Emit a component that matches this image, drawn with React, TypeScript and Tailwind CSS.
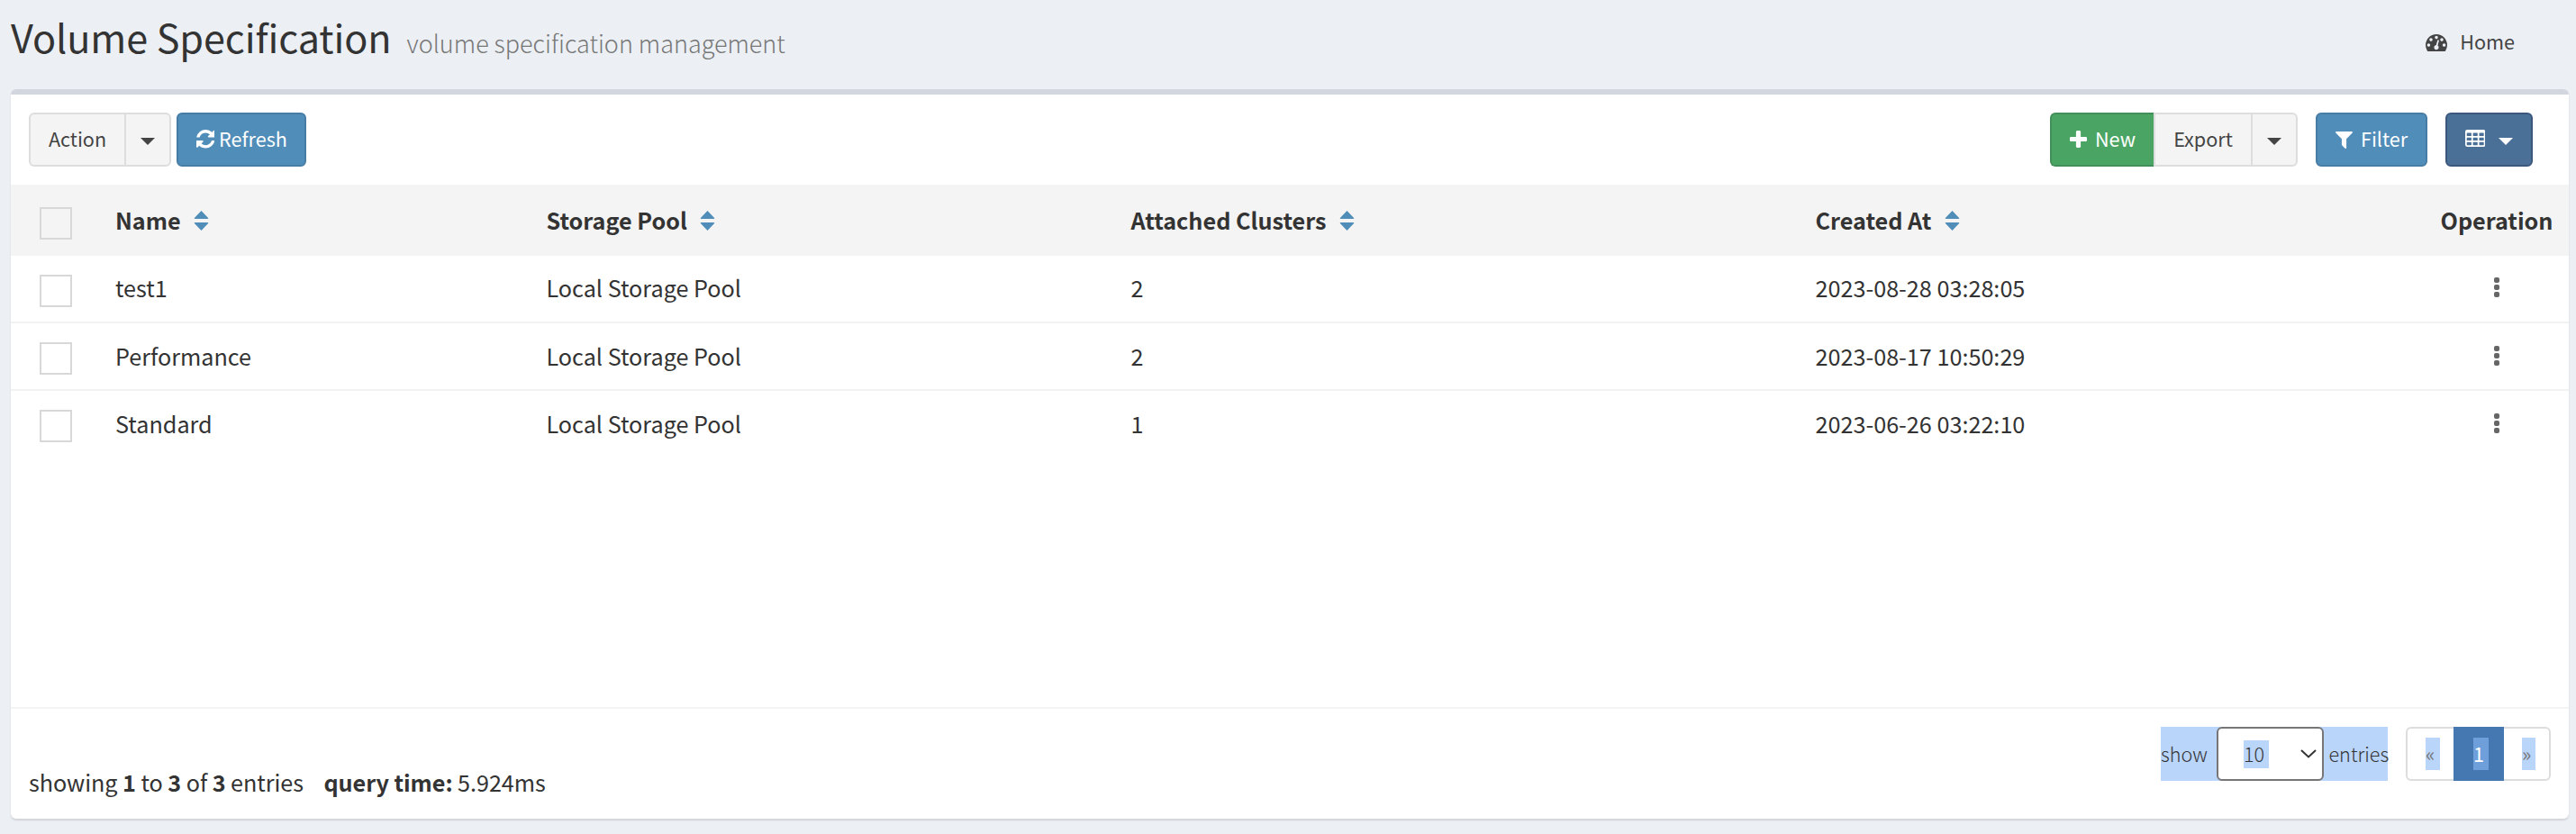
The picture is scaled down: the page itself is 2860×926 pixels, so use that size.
import React from "react";

const ICONS = {
  dashboard: {
    box: "0 256 1792 1408",
    size: "w-[24px] h-[19px]",
    d: "M384 1152q0-53-37.5-90.5t-90.5-37.5-90.5 37.5-37.5 90.5 37.5 90.5 90.5 37.5 90.5-37.5 37.5-90.5zm192-448q0-53-37.5-90.5t-90.5-37.5-90.5 37.5-37.5 90.5 37.5 90.5 90.5 37.5 90.5-37.5 37.5-90.5zm428 481l101-382q6-26-7.5-48.5t-38.5-29.5-48 6.5-30 39.5l-101 382q-60 5-107 43.5t-63 98.5q-20 77 20 146t117 89 146-20 89-117q16-60-6-117t-72-91zm660-33q0-53-37.5-90.5t-90.5-37.5-90.5 37.5-37.5 90.5 37.5 90.5 90.5 37.5 90.5-37.5 37.5-90.5zm-640-640q0-53-37.5-90.5t-90.5-37.5-90.5 37.5-37.5 90.5 37.5 90.5 90.5 37.5 90.5-37.5 37.5-90.5zm448 192q0-53-37.5-90.5t-90.5-37.5-90.5 37.5-37.5 90.5 37.5 90.5 90.5 37.5 90.5-37.5 37.5-90.5zm320 448q0 261-141 483-19 29-54 29h-1402q-35 0-54-29-141-221-141-483 0-182 71-348t191-286 286-191 348-71 348 71 286 191 191 286 71 348z",
  },
  refresh: {
    box: "128 128 1536 1536",
    size: "w-[20.6px] h-[20.6px]",
    d: "M1639 1056q0 5-1 7-64 268-268 434.5t-478 166.5q-146 0-282.5-55t-243.5-157l-129 129q-19 19-45 19t-45-19-19-45v-448q0-26 19-45t45-19h448q26 0 45 19t19 45-19 45l-137 137q71 66 161 102t187 36q134 0 250-65t186-179q11-17 53-117 8-23 30-23h192q13 0 22.5 9.5t9.5 22.5zm25-800v448q0 26-19 45t-45 19h-448q-26 0-45-19t-19-45 19-45l138-138q-148-137-349-137-134 0-250 65t-186 179q-11 17-53 117-8 23-30 23h-199q-13 0-22.5-9.5t-9.5-22.5v-7q65-268 270-434.5t480-166.5q146 0 284 55.5t245 156.5l130-129q19-19 45-19t45 19 19 45z",
  },
  plus: {
    box: "192 128 1408 1408",
    size: "w-[19px] h-[19px]",
    d: "M1600 736v192q0 40-28 68t-68 28h-416v416q0 40-28 68t-68 28h-192q-40 0-68-28t-28-68v-416h-416q-40 0-68-28t-28-68v-192q0-40 28-68t68-28h416v-416q0-40 28-68t68-28h192q40 0 68 28t28 68v416h416q40 0 68 28t28 68z",
  },
  filter: {
    box: "190 256 1412 1408",
    size: "w-[19px] h-[19px]",
    d: "M1595 295q17 41-14 70l-493 493v742q0 42-39 59-13 5-25 5-27 0-45-19l-256-256q-19-19-19-45v-486l-493-493q-31-29-14-70 17-39 59-39h1280q42 0 59 39z",
  },
};

function Icon({ name, className = "" }: { name: keyof typeof ICONS; className?: string }) {
  const icon = ICONS[name];
  return (
    <svg viewBox={icon.box} className={`shrink-0 ${icon.size} ${className}`} fill="currentColor">
      <path d={icon.d} />
    </svg>
  );
}

function TableIcon({ className = "" }: { className?: string }) {
  return (
    <svg viewBox="0 0 1664 1408" className={`h-[19px] w-[22.4px] shrink-0 ${className}`}>
      <path
        fill="currentColor"
        fillRule="evenodd"
        d="M160 0h1344q160 0 160 160v1088q0 160-160 160H160q-160 0-160-160V160Q0 0 160 0zM128 288v192q0 32 32 32h320q32 0 32-32V288q0-32-32-32H160q-32 0-32 32zm512 0v192q0 32 32 32h320q32 0 32-32V288q0-32-32-32H672q-32 0-32 32zm512 0v192q0 32 32 32h320q32 0 32-32V288q0-32-32-32h-320q-32 0-32 32zM128 672v192q0 32 32 32h320q32 0 32-32V672q0-32-32-32H160q-32 0-32 32zm512 0v192q0 32 32 32h320q32 0 32-32V672q0-32-32-32H672q-32 0-32 32zm512 0v192q0 32 32 32h320q32 0 32-32V672q0-32-32-32h-320q-32 0-32 32zM128 1056v192q0 32 32 32h320q32 0 32-32v-192q0-32-32-32H160q-32 0-32 32zm512 0v192q0 32 32 32h320q32 0 32-32v-192q0-32-32-32H672q-32 0-32 32zm512 0v192q0 32 32 32h320q32 0 32-32v-192q0-32-32-32h-320q-32 0-32 32z"
      />
    </svg>
  );
}

function Caret() {
  return (
    <svg viewBox="0 0 16 8" className="mt-1 h-2 w-4 shrink-0" fill="currentColor">
      <path d="M0 0h16L8 8z" />
    </svg>
  );
}

function SortIcon() {
  return (
    <svg viewBox="0 0 17 22" className="ml-[14.5px] mt-[3px] h-[22px] w-[17px] shrink-0" fill="#508db9">
      <path d="M8.5 0l7.6 8q.6 1-.6 1h-14q-1.2 0-.6-1zM8.5 22l7.6-8q.6-1-.6-1h-14q-1.2 0-.6 1z" />
    </svg>
  );
}

function Checkbox() {
  return <span className="block h-9 w-9 border-2 border-[#d8d8d8]" />;
}

const COLUMNS = ["Name", "Storage Pool", "Attached Clusters", "Created At"];
const ROWS = [
  { cells: ["test1", "Local Storage Pool", "2", "2023-08-28 03:28:05"], tone: "border-[#f4f4f4]", pad: "pb-[4px]", dots: "pb-[3px]" },
  { cells: ["Performance", "Local Storage Pool", "2", "2023-08-17 10:50:29"], tone: "border-[#f2f2f2]", pad: "pb-[2px]", dots: "pb-px" },
  { cells: ["Standard", "Local Storage Pool", "1", "2023-06-26 03:22:10"], tone: "border-[#f2f2f2]", pad: "pb-[2px]", dots: "pb-px" },
];
const GRID = "grid grid-cols-[116px_478.5px_649px_760px_692.5px_144px]";

export default function App() {
  return (
    <div className="h-[926px] w-[2860px] overflow-hidden bg-[#ecf0f5] pl-[12px] pr-[8px] font-['Noto_Sans_CJK_SC',sans-serif] text-[25.2px] leading-[36px] text-[#333]">
      <header className="flex h-[99px] items-start justify-between">
        <h1 className="flex items-baseline pt-[14px] text-[43.2px] leading-[52px] tracking-[-0.1px]">
          Volume Specification
          <small className="ml-[17px] text-[27px] font-light leading-[52px] tracking-[-0.02px] text-[#777]">
            volume specification management
          </small>
        </h1>
        <a className="mr-[60px] mt-[28px] flex items-center text-[21.6px] text-[#444]">
          <Icon name="dashboard" className="mr-[14px] mt-[3px]" />
          Home
        </a>
      </header>

      <main className="flex h-[810px] flex-col rounded-[6px] border-t-[6px] border-[#d2d6de] bg-white shadow-[0_2px_2px_rgba(0,0,0,0.12)]">
        <div className="flex h-[100px] shrink-0 items-center justify-between pl-5 pr-10 text-[21.6px] leading-[30px]">
          <div className="flex gap-[6px]">
            <div className="flex h-[60px] w-[158px] rounded-[6px] border-2 border-[#ddd] bg-[#f4f4f4] text-[#444]">
              <button className="w-[106px] border-r-2 border-[#ddd] pb-[3px]">Action</button>
              <button className="flex flex-1 items-center justify-center">
                <Caret />
              </button>
            </div>
            <button className="flex h-[60px] w-[144px] items-center rounded-[6px] border-2 border-[#477ca4] bg-[#508db9] pb-[2px] pl-[19.5px] text-white">
              <Icon name="refresh" className="mr-[5px] mt-px" />
              Refresh
            </button>
          </div>
          <div className="flex gap-5">
            <div className="flex h-[60px] text-[#444]">
              <button className="flex w-[115px] items-center rounded-l-[6px] border-2 border-r-0 border-[#438f5a] bg-[#4aa564] pb-[2px] pl-[20px] text-white">
                <Icon name="plus" className="mr-[9px]" />
                New
              </button>
              <button className="w-[108px] border-2 border-r-0 border-[#ddd] bg-[#f4f4f4] pb-[3px]">Export</button>
              <button className="flex w-[52px] items-center justify-center rounded-r-[6px] border-2 border-[#ddd] bg-[#f4f4f4]">
                <Caret />
              </button>
            </div>
            <button className="flex h-[60px] w-[124px] items-center rounded-[6px] border-2 border-[#477ca4] bg-[#508db9] pb-[2px] pl-[20px] text-white">
              <Icon name="filter" className="mr-[9px] mt-[3px]" />
              Filter
            </button>
            <button className="flex h-[60px] w-[97px] items-center rounded-[6px] border-2 border-[#3b587c] bg-[#4a7098] pl-[20px] text-white">
              <TableIcon className="-mt-[3px] mr-[15px]" />
              <Caret />
            </button>
          </div>
        </div>

        <div className={`${GRID} h-[77px] shrink-0 items-center bg-[#f4f4f4] font-bold`}>
          <div className="pl-8 pt-[9px]">
            <Checkbox />
          </div>
          {COLUMNS.map((label) => (
            <div key={label} className="flex items-center">
              {label}
              <SortIcon />
            </div>
          ))}
          <div className="pr-4 text-center">Operation</div>
        </div>
        {ROWS.map((row) => (
          <div key={row.cells[0]} className={`${GRID} h-[75px] shrink-0 items-center border-t-2 ${row.tone}`}>
            <div className="pl-8 pt-[5px]">
              <Checkbox />
            </div>
            {row.cells.map((cell, i) => (
              <div key={i} className={row.pad}>
                {cell}
              </div>
            ))}
            <div className={`flex flex-col items-center gap-[2px] pr-4 ${row.dots}`}>
              <i className="h-[6px] w-[6px] rounded-[2px] bg-[#666]" />
              <i className="h-[6px] w-[6px] rounded-[2px] bg-[#666]" />
              <i className="h-[6px] w-[6px] rounded-[2px] bg-[#666]" />
            </div>
          </div>
        ))}

        <footer className="mt-auto flex h-[124px] shrink-0 justify-between border-t-2 border-[#f4f4f4] pl-5 pr-5 pt-5">
          <div className="whitespace-pre pt-[43px] tracking-[-0.06px]">
            showing <b>1</b> to <b>3</b> of <b>3</b> entries<b className="ml-[22.5px]">query time:</b> 5.924ms
          </div>
          <div className="flex h-[60px] text-[21.6px] leading-[30px]">
            <div className="flex w-[252px] items-center bg-[#bad5fa] font-light">
              <span className="w-[62px] shrink-0">show</span>
              <div className="flex h-[60px] w-[119px] shrink-0 items-center rounded-[6px] border-2 border-[#767676] bg-white pl-7">
                <span className="h-[31px] w-[28px] bg-[#bad5fa]">10</span>
                <svg viewBox="0 0 18 10" className="ml-[35px] h-[10px] w-[18px]" fill="none" stroke="#333" strokeWidth="2">
                  <path d="M1 1l8 7.5 8-7.5" />
                </svg>
              </div>
              <span className="ml-[5.5px]">entries</span>
            </div>
            <nav className="ml-5 flex w-[161px] rounded-[6px] text-[#777]">
              <a className="flex w-[53px] items-center rounded-l-[6px] border-2 border-r-0 border-[#ddd] pl-5">
                <span className="h-9 w-4 bg-[#bad5fa] leading-[36px]">«</span>
              </a>
              <a className="flex w-[56px] items-center bg-[#4578b0] pl-[22px] text-white">
                <span className="h-9 w-[17px] bg-[#6e9fdb] leading-[36px]">1</span>
              </a>
              <a className="flex flex-1 items-center rounded-r-[6px] border-2 border-l-0 border-[#ddd] pl-5">
                <span className="h-9 w-[15px] bg-[#bad5fa] leading-[36px]">»</span>
              </a>
            </nav>
          </div>
        </footer>
      </main>
    </div>
  );
}
